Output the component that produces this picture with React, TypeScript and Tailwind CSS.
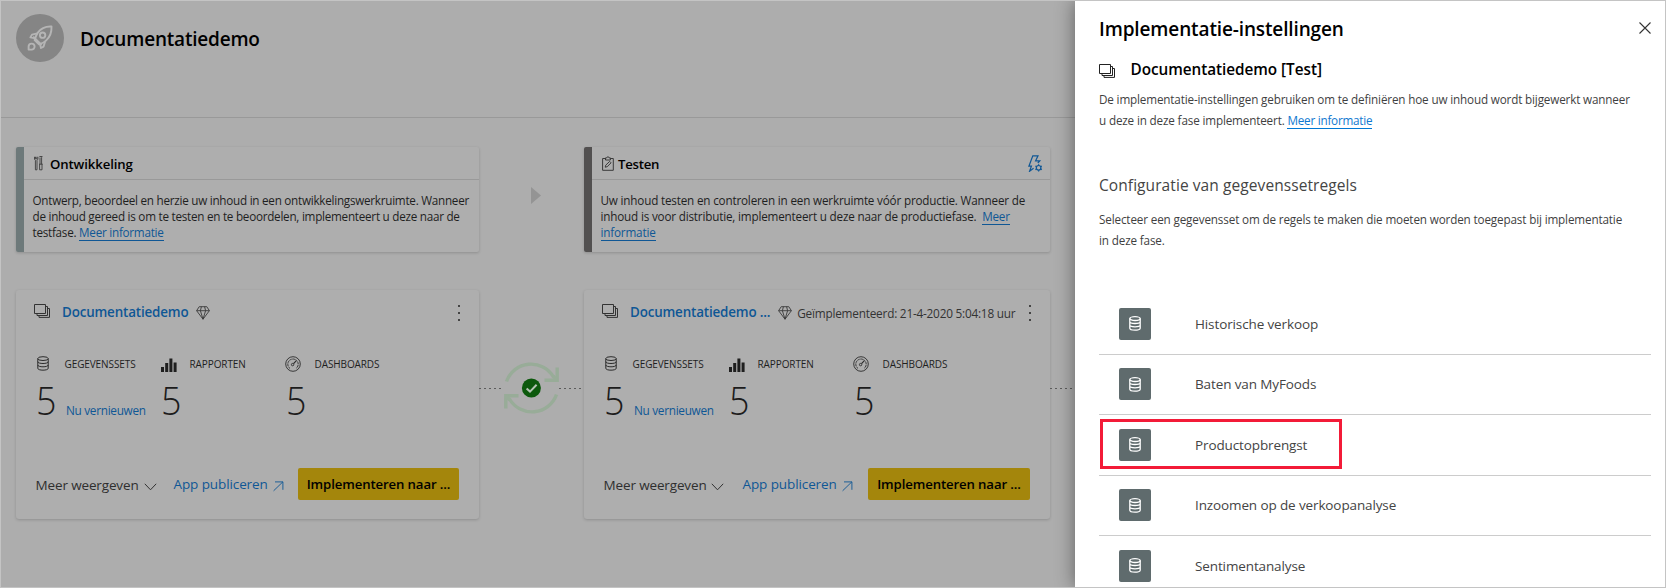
import type { ReactNode } from "react";

function RocketIcon() {
  return (
    <svg width="26" height="26" viewBox="0 0 26 26" fill="none" stroke="#b5b5b5" strokeWidth="1.9" strokeLinejoin="round">
      <path d="M24.5 1.5C19 1.2 14 3.2 10.8 7.6C9.4 9.6 8.4 12.2 7.6 15L12 19.4C15 18.4 17.4 17.2 19 15.6C23 12 24.8 7 24.5 1.5Z" />
      <path d="M10.4 8.3L5 9.6L3.4 12.4L8.2 13.4M18.2 16.2L16.6 21.6L14 23L12.8 18.8" />
      <circle cx="15.6" cy="10.2" r="2.7" />
      <path d="M6.2 11.6L14.6 20" />
      <path d="M1.6 24.6V21.6A3 3 0 1 1 4.6 24.6Z" />
    </svg>
  );
}

function ToolsIcon() {
  return (
    <svg width="9" height="15" viewBox="0 0 9 15" fill="none" stroke="#3c3c3c" strokeWidth="0.9">
      <path d="M0.5 0.8V3.2L1.4 4.3V13.8H3V4.3L3.9 3.2V0.8M1.5 0.8V2.8H2.9V0.8" />
      <path d="M5.4 0.5H8.2L7.6 1.5V8.2M6 1.5V8.2M5 8.2H8.7M5.6 8.2V13.8H8V8.2" />
    </svg>
  );
}

function ClipboardIcon() {
  return (
    <svg width="12" height="15" viewBox="0 0 12 15" fill="none" stroke="#3a3a3a" strokeWidth="1">
      <path d="M3.5 2.5H0.6V14.3H11.3V2.5H8.4" />
      <path d="M3.5 1.9H4.7C4.9 0.4 7 0.4 7.2 1.9H8.4V4H3.5Z" />
      <path d="M3.2 11.2L3.7 9.2L7.7 5.4L9.1 6.8L5.2 10.7Z" />
    </svg>
  );
}

function RulesIcon() {
  return (
    <svg width="15" height="17" viewBox="0 0 15 17" fill="none" stroke="#0f5795" strokeWidth="1.2">
      <path d="M5.6 13.2L1.6 16.2L3.4 11.2H0.9L4.8 0.8H10L7.6 5.8H11.8L9.8 8" />
      <circle cx="10.6" cy="12.8" r="2.3" />
      <path d="M10.6 9.2V10.4M10.6 15.2V16.4M7.4 11L8.5 11.6M12.7 14L13.8 14.6M13.8 11L12.7 11.6M8.5 14L7.4 14.6" />
    </svg>
  );
}

function StackIcon({ className }: { className: string }) {
  return (
    <svg className={className} width="17" height="14" viewBox="0 0 17 14" fill="none" stroke="currentColor" strokeWidth="1">
      <path d="M0.5 0.5H11.5V9.5H0.5Z" />
      <path d="M11.5 2.5H13.5V11.5H3V9.5M13.5 4.5H15.5V13.4H5V11.5" />
    </svg>
  );
}

function GemIcon() {
  return (
    <svg width="14" height="14" viewBox="0 0 14 14" fill="none" stroke="#3a3a3a" strokeWidth="0.9" strokeLinejoin="round">
      <path d="M3.2 0.7H10.8L13.4 4.7L7 13.2L0.6 4.7Z" />
      <path d="M0.6 4.7H13.4M4.4 4.7L7 13.2L9.6 4.7M4.4 4.7L5.4 0.7M9.6 4.7L8.6 0.7" />
    </svg>
  );
}

function DatabaseIcon({ className }: { className: string }) {
  return (
    <svg className={className} width="12" height="15" viewBox="0 0 12 15" fill="none" stroke="currentColor">
      <ellipse cx="6" cy="2.6" rx="5.2" ry="1.9" />
      <path d="M0.8 2.6V12.3C0.8 14.8 11.2 14.8 11.2 12.3V2.6M0.8 5.7C0.8 8.1 11.2 8.1 11.2 5.7M0.8 9C0.8 11.4 11.2 11.4 11.2 9" />
    </svg>
  );
}

function BarsIcon() {
  return (
    <svg width="16" height="14" viewBox="0 0 16 14" fill="#1f1f1f">
      <path d="M0 9H3V14H0ZM4.2 5H7.2V14H4.2ZM8.4 0.5H11.4V14H8.4ZM12.6 4.5H15.6V14H12.6Z" />
    </svg>
  );
}

function GaugeIcon() {
  return (
    <svg width="16" height="16" viewBox="0 0 16 16" fill="none" stroke="#2b2b2b" strokeWidth="0.9">
      <circle cx="8" cy="8" r="7.3" />
      <path d="M4.9 12.4A5.2 5.2 0 1 1 11.1 12.4" strokeDasharray="2.4 0.6" />
      <circle cx="7.6" cy="8.6" r="1.2" />
      <path d="M8.5 7.6L11.2 4.8" strokeWidth="1.2" />
    </svg>
  );
}

function SyncBadge() {
  return (
    <svg width="55" height="56" viewBox="0 0 55 56" fill="none">
      <g stroke="#98ac98" strokeWidth="3.4">
        <path d="M2.5 21.5A26 26 0 0 1 49.5 17" />
        <path d="M53.2 7.5V20.2H40.5" />
        <path d="M52.5 34.5A26 26 0 0 1 5.5 39" />
        <path d="M1.8 48.5V35.8H14.5" />
        <path d="M49 16L53.2 20.2M6 40L1.8 35.8" />
      </g>
      <circle cx="27.4" cy="28" r="9.5" fill="#0c590c" />
      <path d="M22.6 28.4L26 31.6L32.6 24.8" stroke="#b4c4b4" strokeWidth="2" />
    </svg>
  );
}

function Dots() {
  return (
    <div className="flex w-[3px] flex-col gap-[5px]">
      <span className="size-[2px] bg-[#444]" />
      <span className="size-[2px] bg-[#444]" />
      <span className="size-[2px] bg-[#444]" />
    </div>
  );
}

function StageCard({ accent, icon, title, titleClass, textClass, action, children }: { accent: string; icon: ReactNode; title: string; titleClass: string; textClass: string; action?: ReactNode; children: ReactNode }) {
  return (
    <section className="flex h-[105px] rounded-[2px] bg-[#aeaeae] shadow-[0_1px_3px_rgba(0,0,0,0.18)]">
      <div className={`w-2 shrink-0 rounded-l-[2px] ${accent}`} />
      <div className="min-w-0 flex-1">
        <header className="flex h-[33px] items-start justify-between border-b border-[#999] pl-[10px] pr-[7px] pt-2">
          <div className="flex items-start">
            <span className="w-4 pt-px">{icon}</span>
            <h2 className={`-mt-px text-[13.2px] leading-[20px] font-semibold text-black ${titleClass}`}>{title}</h2>
          </div>
          {action}
        </header>
        <p className={`whitespace-nowrap pl-[8.5px] pt-3 text-[11.7px] leading-[16px] text-[#1f1f1f] ${textClass}`}>{children}</p>
      </div>
    </section>
  );
}

function MoreLink({ children }: { children: ReactNode }) {
  return <a className="border-b border-[#0f5795] text-[#0f5795]">{children}</a>;
}

function Stat({ icon, label, extra }: { icon: ReactNode; label: string; extra?: string }) {
  return (
    <div className="w-[125px]">
      <div className="flex h-6 items-start">
        <span className="w-[27.5px]">{icon}</span>
        <span className="text-[10px] leading-[16px] tracking-[-0.1px] text-[#1f1f1f]">{label}</span>
      </div>
      <div className="-ml-px flex items-end whitespace-nowrap">
        <span className="w-[30px] origin-left scale-x-[0.92] text-[39px] leading-[40px] font-[360] text-[#1c1c1c]">5</span>
        {extra && <a className="pb-[2px] text-[11.8px] leading-[16px] tracking-[-0.3px] text-[#0f5795]">{extra}</a>}
      </div>
    </div>
  );
}

function WorkspaceCard({ name, deployed, wide }: { name: string; deployed?: string; wide?: boolean }) {
  return (
    <section className="flex h-[229px] flex-col rounded-[3px] bg-[#aeaeae] pl-[18px] shadow-[0_1px_3px_rgba(0,0,0,0.18)]">
      <div className="flex h-[66px] items-start pt-3">
        <StackIcon className="mt-[2px] mr-[11px] text-[#333]" />
        <span className="whitespace-nowrap text-[13.4px] leading-[20px] font-semibold tracking-[-0.16px] text-[#0f5795]">{name}</span>
        <span className="ml-2 mt-[4px]"><GemIcon /></span>
        {deployed && <span className="ml-[5px] mt-px whitespace-nowrap text-[11.8px] leading-[20px] tracking-[-0.22px] text-[#333]">{deployed}</span>}
        <div className="ml-auto mr-[18px] mt-[3px]"><Dots /></div>
      </div>
      <div className="flex pl-[3px]">
        <Stat icon={<DatabaseIcon className="text-[#2b2b2b]" />} label="GEGEVENSSETS" extra="Nu vernieuwen" />
        <Stat icon={<span className="-ml-px block pt-[2px]"><BarsIcon /></span>} label="RAPPORTEN" />
        <Stat icon={<span className="-ml-0.5 block"><GaugeIcon /></span>} label="DASHBOARDS" />
      </div>
      <div className="mt-12 flex whitespace-nowrap pl-[1.5px]">
        <div className="flex w-[138px] shrink-0 pt-[7px]">
          <span className="w-[108.5px] text-[13.5px] leading-[20px] tracking-[-0.14px] text-[#2e2e2e]">Meer weergeven</span>
          <svg className={`mt-2 ${wide ? "-ml-[1.5px]" : ""}`} width="13" height="8" viewBox="0 0 13 8" fill="none" stroke="#333" strokeWidth="1">
            <path d="M0.8 0.8L6.5 6.8L12.2 0.8" />
          </svg>
        </div>
        <div className={`flex shrink-0 pt-[6px] ${wide ? "w-[126.5px] pl-px" : "w-[124.5px]"}`}>
          <span className="w-[99px] text-[13.5px] leading-[20px] tracking-[-0.1px] text-[#0f5795]">App publiceren</span>
          <svg className="mt-[7px]" width="11" height="11" viewBox="0 0 11 11" fill="none" stroke="#0f5795" strokeWidth="0.9">
            <path d="M0.6 9.8L9.8 0.9M2 0.9H9.9V8.8" />
          </svg>
        </div>
        <button className={`h-8 rounded-[2px] bg-[#a4860c] pt-px text-center text-[13.2px] font-semibold tracking-[-0.12px] text-black ${wide ? "w-[162px]" : "w-[161px]"}`}>
          Implementeren naar ...
        </button>
      </div>
    </section>
  );
}

const datasets = ["Historische verkoop", "Baten van MyFoods", "Productopbrengst", "Inzoomen op de verkoopanalyse", "Sentimentanalyse"];

export default function App() {
  return (
    <div className="flex h-[588px] w-[1666px] overflow-hidden border border-[#c4c4c4] font-['Open_Sans','Noto_Sans',sans-serif]">
      <main className="w-[1074px] shrink-0 bg-[#adadad]">
        <header className="flex h-[117px] border-b border-[#999] pl-[15px] pt-[13px]">
          <div className="flex size-12 items-center justify-center rounded-full bg-[#858585]">
            <RocketIcon />
          </div>
          <h1 className="ml-4 mt-[13px] text-[19px] leading-[24px] font-semibold tracking-[-0.2px] text-black">Documentatiedemo</h1>
        </header>
        <div className="grid grid-cols-[463px_105px_466px_25px] pl-[15px] pt-[29px]">
          <StageCard accent="bg-[#6d797a]" icon={<ToolsIcon />} title="Ontwikkeling" titleClass="tracking-[-0.12px]" textClass="tracking-[-0.255px]">
            Ontwerp, beoordeel en herzie uw inhoud in een ontwikkelingswerkruimte. Wanneer
            <br />
            de inhoud gereed is om te testen en te beoordelen, implementeert u deze naar de
            <br />
            testfase. <MoreLink>Meer informatie</MoreLink>
          </StageCard>
          <div className="pl-[52px] pt-10">
            <svg width="10" height="17" viewBox="0 0 10 17" fill="#949494">
              <path d="M0 0L10 8.5L0 17Z" />
            </svg>
          </div>
          <StageCard accent="bg-[#525050]" icon={<ClipboardIcon />} title="Testen" titleClass="tracking-[-0.25px]" textClass="tracking-[-0.18px]" action={<RulesIcon />}>
            Uw inhoud testen en controleren in een werkruimte vóór productie. Wanneer de
            <br />
            inhoud is voor distributie, implementeert u deze naar de productiefase. &nbsp;<MoreLink>Meer</MoreLink>
            <br />
            <MoreLink>informatie</MoreLink>
          </StageCard>
        </div>
        <div className="grid grid-cols-[463px_105px_466px_25px] pl-[15px] pt-[38px]">
          <WorkspaceCard name="Documentatiedemo" />
          <div className="mt-[70px] flex h-[56px] items-center">
            <span className="h-px w-[25px] bg-[repeating-linear-gradient(90deg,#5c5c5c_0_2px,transparent_2px_5px)]" />
            <SyncBadge />
            <span className="h-px w-[23px] bg-[repeating-linear-gradient(90deg,#5c5c5c_0_2px,transparent_2px_5px)]" />
          </div>
          <WorkspaceCard name="Documentatiedemo ..." deployed="Geïmplementeerd: 21-4-2020 5:04:18 uur" wide />
          <div className="mt-[70px] flex h-[56px] items-center">
            <span className="h-px w-[23px] bg-[repeating-linear-gradient(90deg,#5c5c5c_0_2px,transparent_2px_5px)]" />
          </div>
        </div>
      </main>
      <aside className="z-10 w-[590px] shrink-0 bg-white pl-6 pr-[14px] pt-4 shadow-[0_0_18px_rgba(0,0,0,0.45)]">
        <div className="flex justify-between">
          <h2 className="text-[19px] leading-[24px] font-semibold tracking-[-0.13px] text-black">Implementatie-instellingen</h2>
          <svg className="mt-[5px]" width="12" height="12" viewBox="0 0 12 12" fill="none" stroke="#333" strokeWidth="1.1">
            <path d="M0.5 0.5L11.5 11.5M11.5 0.5L0.5 11.5" />
          </svg>
        </div>
        <div className="mt-[18px] flex">
          <StackIcon className="mt-[5px] mr-[14.5px] text-[#222]" />
          <h3 className="text-[15.3px] leading-[20px] font-[550] tracking-[-0.04px] text-black">Documentatiedemo [Test]</h3>
        </div>
        <p className="mt-[10px] whitespace-nowrap text-[11.7px] leading-[21px] tracking-[-0.155px] text-[#3f3f3f]">
          De implementatie-instellingen gebruiken om te definiëren hoe uw inhoud wordt bijgewerkt wanneer
          <br />
          u deze in deze fase implementeert. <a className="border-b border-[#0078d4] tracking-[-0.23px] text-[#0f78d0]">Meer informatie</a>
        </p>
        <h3 className="mt-[44px] text-[15.5px] leading-[20px] font-medium tracking-[0.08px] text-[#444]">Configuratie van gegevenssetregels</h3>
        <p className="mt-[14px] h-[85px] whitespace-nowrap text-[11.7px] leading-[21px] tracking-[-0.145px] text-[#3f3f3f]">
          Selecteer een gegevensset om de regels te maken die moeten worden toegepast bij implementatie
          <br />
          in deze fase.
        </p>
        <ul>
          {datasets.map((name) => (
            <li key={name} className="relative flex h-[60.5px] items-center border-b border-[#ccc] pl-5">
              <span className="flex size-8 items-center justify-center rounded-[2px] bg-[#5f6b6d]">
                <DatabaseIcon className="text-white [stroke-width:1.3]" />
              </span>
              <span className="ml-11 text-[13.5px] leading-[20px] tracking-[-0.12px] text-[#444]">{name}</span>
              {name === "Productopbrengst" && <span className="absolute left-px top-[4px] h-[50px] w-[242px] border-[3px] border-[#f31b38]" />}
            </li>
          ))}
        </ul>
      </aside>
    </div>
  );
}
